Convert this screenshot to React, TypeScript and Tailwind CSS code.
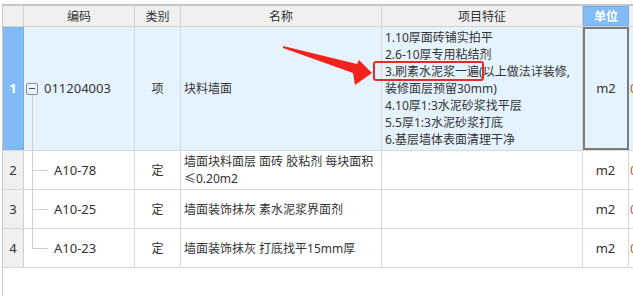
import React from 'react';

const font = { fontFamily: '"Noto Sans", "Noto Sans CJK SC", sans-serif' };

const features = [
  '1.10厚面砖铺实拍平',
  '2.6-10厚专用粘结剂',
  '3.刷素水泥浆一遍(以上做法详装修,',
  '装修面层预留30mm)',
  '4.10厚1:3水泥砂浆找平层',
  '5.5厚1:3水泥砂浆打底',
  '6.基层墙体表面清理干净',
];

const children = [
  { no: '2', code: 'A10-78', name: ['墙面块料面层 面砖 胶粘剂 每块面积', '≤0.20m2'] },
  { no: '3', code: 'A10-25', name: ['墙面装饰抹灰 素水泥浆界面剂'] },
  { no: '4', code: 'A10-23', name: ['墙面装饰抹灰 打底找平15mm厚'] },
];

function Head({ w, children }: { w: string; children?: React.ReactNode }) {
  return (
    <div className={`${w} shrink-0 h-full flex items-center justify-center border-r border-[#d2d2d2] text-[#333]`}>
      {children}
    </div>
  );
}

export default function App() {
  return (
    <div className="relative w-[633px] h-[296px] overflow-hidden bg-white text-[12px] leading-[17px]" style={font}>
      <div className="pt-[4px] pl-[2px] h-full">
        <div className="h-full border-l border-t-2 border-[#c6c6c6]">
          {/* header */}
          <div className="flex h-[21px] bg-[#f0f0f0] border-b border-[#d2d2d2]">
            <Head w="w-[21px]" />
            <Head w="w-[111px]">编码</Head>
            <Head w="w-[46px]">类别</Head>
            <Head w="w-[201px]">名称</Head>
            <Head w="w-[201px]">项目特征</Head>
            <div className="w-[46px] shrink-0 h-full flex items-center justify-center bg-[#82bcf7] border border-[#6fb0f2] text-white font-bold">
              单位
            </div>
            <div className="flex-1 h-full" />
          </div>

          {/* row 1 */}
          <div className="flex h-[124px] bg-[#e5f3fe] border-b border-[#d8d8d8]">
            <div className="w-[21px] shrink-0 flex items-center justify-center bg-[#80bbf6] border-r border-[#6fb0f2] text-white font-bold text-[13px]">
              1
            </div>
            <div className="w-[111px] shrink-0 flex flex-col border-r border-[#d8d8d8] text-[#333]">
              <div className="flex-1" />
              <div className="flex items-center h-3">
                <div className="ml-[2px] w-3 h-3 border border-[#8c8c8c] rounded-[2px] flex items-center justify-center">
                  <div className="w-[6px] h-px bg-[#555]" />
                </div>
                <span className="ml-[6px] text-[13px]">011204003</span>
              </div>
              <div className="flex-1 ml-[8px] border-l border-[#d0d0d0]" />
            </div>
            <div className="w-[46px] shrink-0 flex items-center justify-center border-r border-[#d8d8d8] text-[#333]">项</div>
            <div className="w-[201px] shrink-0 flex items-center pl-[3px] border-r border-[#d8d8d8] text-[#333]">块料墙面</div>
            <div className="w-[201px] shrink-0 flex flex-col justify-center pl-[3px] border-r border-[#d8d8d8] text-[#333]">
              {features.map((f) => (
                <div key={f} className="whitespace-nowrap">{f}</div>
              ))}
            </div>
            <div className="w-[46px] shrink-0 flex items-center justify-center ring-2 ring-inset ring-[#7b7b7b] text-[#333] text-[13px]">
              m2
            </div>
            <div className="flex-1 flex items-center pl-[1px] text-[#a06a30] text-[13px] overflow-hidden">0</div>
          </div>

          {/* child rows */}
          {children.map((c, i) => (
            <div key={c.no} className="flex h-[39px] border-b border-[#d8d8d8]">
              <div className="w-[21px] shrink-0 flex items-center justify-center bg-[#f0f0f0] border-r border-[#cfcfcf] text-[#333] text-[13px]">
                {c.no}
              </div>
              <div className="w-[111px] shrink-0 flex border-r border-[#d8d8d8] text-[#333]">
                <div className="ml-[8px] w-[16px] flex flex-col">
                  <div className="flex-1 border-l border-b border-[#d0d0d0]" />
                  <div className={i < children.length - 1 ? 'flex-1 border-l border-[#d0d0d0]' : 'flex-1'} />
                </div>
                <span className="self-center ml-[6px] text-[13px]">{c.code}</span>
              </div>
              <div className="w-[46px] shrink-0 flex items-center justify-center border-r border-[#d8d8d8] text-[#333]">定</div>
              <div className="w-[201px] shrink-0 flex flex-col justify-center pl-[3px] border-r border-[#d8d8d8] text-[#333]">
                {c.name.map((n) => (
                  <div key={n} className="whitespace-nowrap">{n}</div>
                ))}
              </div>
              <div className="w-[201px] shrink-0 border-r border-[#d8d8d8]" />
              <div className="w-[46px] shrink-0 flex items-center justify-center border-r border-[#d8d8d8] text-[#333] text-[13px]">
                m2
              </div>
              <div className="flex-1 flex items-center pl-[1px] text-[#a06a30] text-[13px] overflow-hidden">0</div>
            </div>
          ))}
        </div>
      </div>

      {/* annotation: red box + arrow */}
      <div className="absolute left-[373px] top-[61px] w-[111px] h-[20px] border-2 border-[#ea2a22] rounded-[3px] pointer-events-none" />
      <svg className="absolute left-0 top-0 pointer-events-none" width="633" height="296" viewBox="0 0 633 296">
        <polygon points="283,46 357,64 359,60 372,73 355,85 353,73 283,48" fill="#f2231d" />
      </svg>
    </div>
  );
}
